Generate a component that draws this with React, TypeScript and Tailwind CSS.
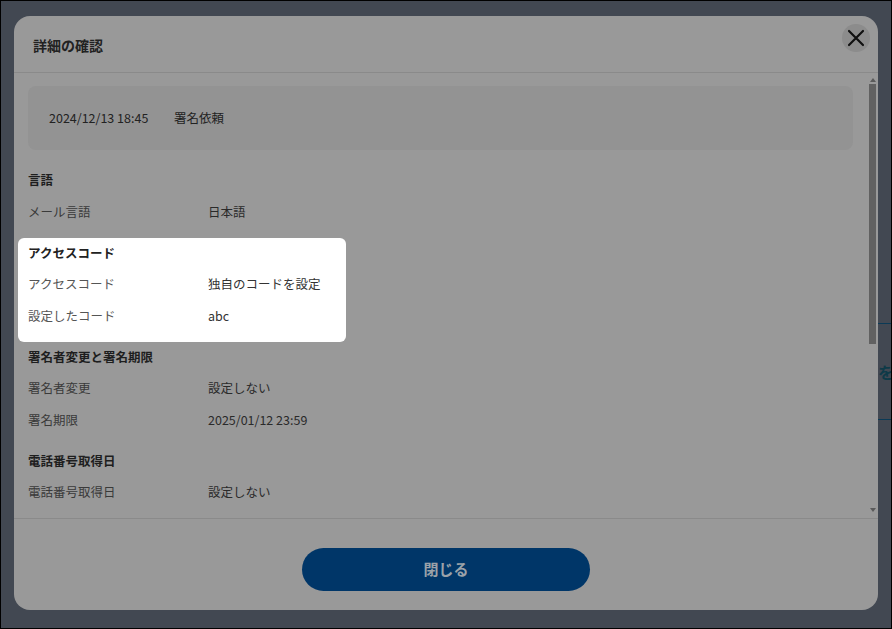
import React from "react";

type Row = { label: string; value: string };
type Section = { title: string; rows: Row[]; focus?: boolean };

const sections: Section[] = [
  { title: "言語", rows: [{ label: "メール言語", value: "日本語" }] },
  {
    title: "アクセスコード",
    focus: true,
    rows: [
      { label: "アクセスコード", value: "独自のコードを設定" },
      { label: "設定したコード", value: "abc" },
    ],
  },
  {
    title: "署名者変更と署名期限",
    rows: [
      { label: "署名者変更", value: "設定しない" },
      { label: "署名期限", value: "2025/01/12 23:59" },
    ],
  },
  { title: "電話番号取得日", rows: [{ label: "電話番号取得日", value: "設定しない" }] },
];

function DetailSection({ section }: { section: Section }) {
  const wrap = section.focus
    ? "-ml-[10px] w-[328px] pl-[10px] pb-[9.5px] rounded-[6px] bg-white"
    : "pb-[9.5px]";
  return (
    <div className={wrap}>
      <div
        className={
          "h-[31.5px] flex items-center font-bold text-[12.5px] " +
          (section.focus ? "text-[#222]" : "text-[#1e1e1e]")
        }
      >
        {section.title}
      </div>
      {section.rows.map((r) => (
        <div key={r.label} className="h-[31.5px] flex items-center text-[12.5px]">
          <span className={"w-[180px] " + (section.focus ? "text-[#555]" : "text-[#3a3a3a]")}>
            {r.label}
          </span>
          <span className={section.focus ? "text-[#333]" : "text-[#2a2a2a]"}>{r.value}</span>
        </div>
      ))}
    </div>
  );
}

export default function App() {
  return (
    <div
      className="relative w-[892px] h-[629px] overflow-hidden border border-black bg-[#424852]"
      style={{ fontFamily: '"Noto Sans CJK JP", "Noto Sans", sans-serif' }}
    >
      {/* page behind the modal */}
      <div className="pt-[322px] ml-[700px] overflow-hidden">
        <div className="border-t border-[#0b3a56]" />
        <div className="h-[95px] flex items-center pl-[177px] whitespace-nowrap font-bold text-[16px] text-[#0e3a48]">
          を確
        </div>
        <div className="border-t border-[#0b3a56]" />
      </div>

      {/* overlay + modal */}
      <div className="absolute inset-0 pl-[13px] pt-[15px]">
        <div className="w-[864px] h-[594px] flex flex-col rounded-[16px] bg-[#999999] overflow-hidden">
          <div className="h-[57px] shrink-0 flex justify-between border-b border-[#8a8a8a] pl-[19px] pr-[8px]">
            <div className="pt-[19px] font-bold text-[14px] text-[#222]">詳細の確認</div>
            <button className="mt-[8px] w-[28px] h-[28px] rounded-full bg-[#8c8c8c] flex items-center justify-center">
              <svg width="20" height="20" viewBox="0 0 20 20" fill="none" stroke="#111" strokeWidth="2.2" strokeLinecap="round">
                <path d="M3 3 L17 17 M17 3 L3 17" />
              </svg>
            </button>
          </div>

          <div className="flex-1 flex min-h-0 border-b border-[#8a8a8a]">
            <div className="flex-1 pl-[14px] pr-[13px] pt-[13px] overflow-hidden">
              <div className="h-[64px] rounded-[8px] bg-[#939393] flex items-center pl-[21px] text-[12.5px] text-[#222]">
                <span className="w-[125px]">2024/12/13 18:45</span>
                <span>署名依頼</span>
              </div>
              <div className="mt-[15px]">
                {sections.map((s) => (
                  <DetailSection key={s.title} section={s} />
                ))}
              </div>
            </div>
            <div className="w-[12px] shrink-0 flex flex-col items-start pl-[3px] pt-[5px] pb-[6px]">
              <div className="ml-[1px] w-0 h-0 border-x-[3px] border-x-transparent border-b-[4px] border-b-[#5a5a5a]" />
              <div className="mt-[2px] w-[7px] h-[260px] bg-[#616161]" />
              <div className="flex-1" />
              <div className="ml-[1px] w-0 h-0 border-x-[3px] border-x-transparent border-t-[4px] border-t-[#5a5a5a]" />
            </div>
          </div>

          <div className="h-[91px] shrink-0 flex justify-center pt-[29px]">
            <button className="w-[288px] h-[43px] rounded-full bg-[#003668] font-bold text-[15px] text-[#9ba2a9]">
              閉じる
            </button>
          </div>
        </div>
      </div>
    </div>
  );
}
